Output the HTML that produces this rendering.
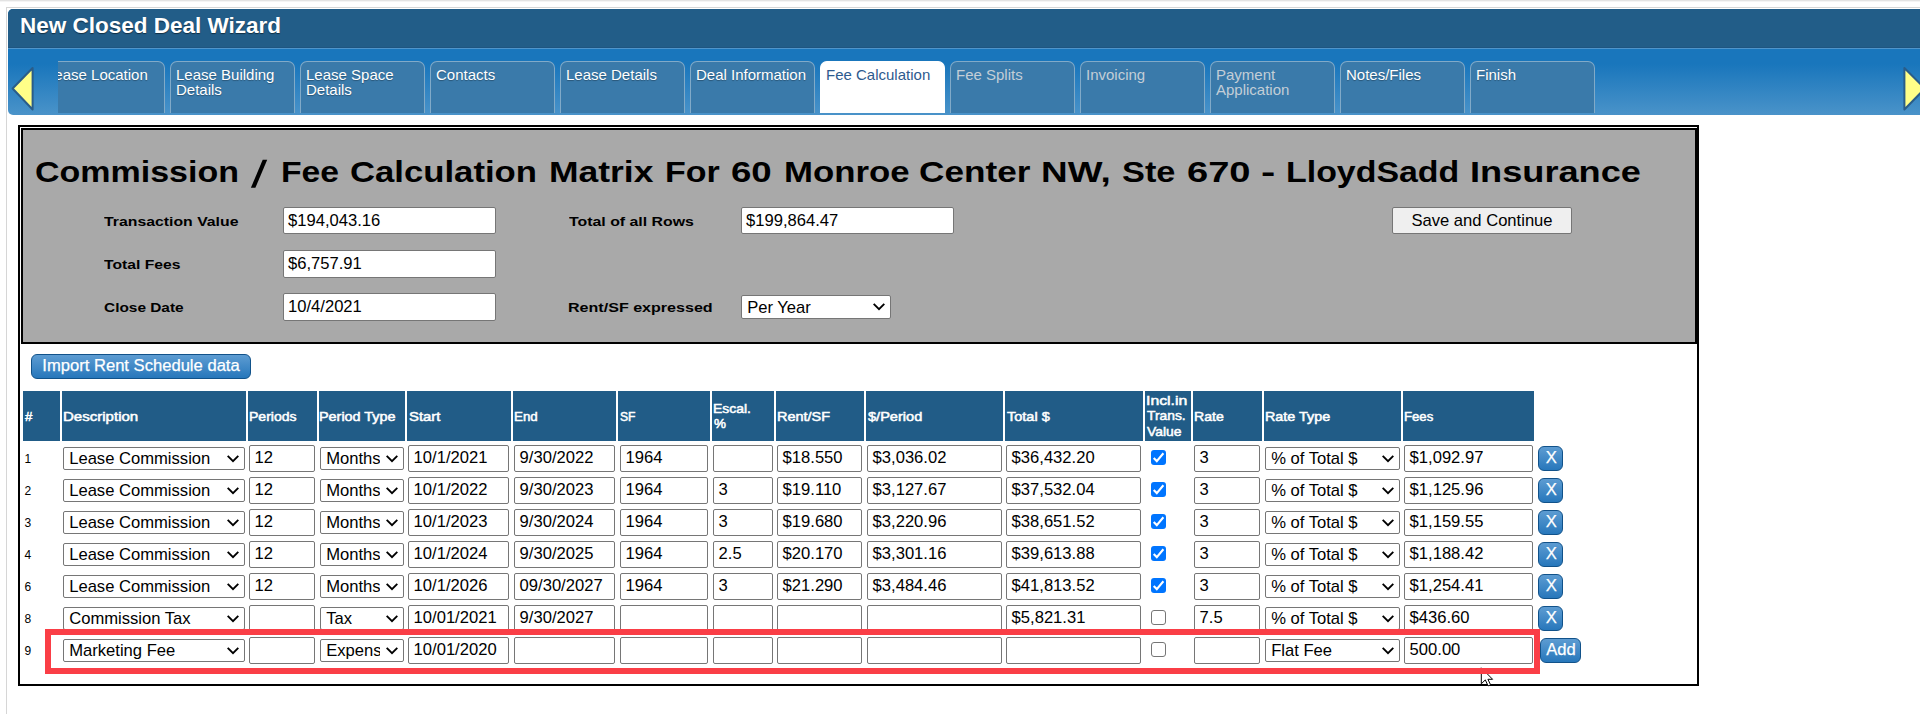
<!DOCTYPE html>
<html><head><meta charset="utf-8"><title>New Closed Deal Wizard</title>
<style>
html,body{margin:0;padding:0;background:#fff;}
body{width:1920px;height:714px;position:relative;overflow:hidden;font-family:"Liberation Sans", sans-serif;font-size:16px;color:#000;}
.abs,.ft,.in,.sel,.cb,.btn,.tab,.hc,.rn{position:absolute;box-sizing:border-box;}
.ft{white-space:nowrap;font-weight:bold;transform-origin:0 0;display:block;}
.in{background:#fff;border:1px solid #767676;border-radius:2px;height:27px;padding:0 0 0 4.6px;line-height:24px;font-size:16.6px;white-space:nowrap;overflow:hidden;}
.in.g{line-height:26px;padding-left:4px;}
.sel{background:#fff;border:1px solid #767676;border-radius:2px;height:23px;padding:0 0 0 5.2px;line-height:21px;font-size:16.6px;white-space:nowrap;overflow:hidden;}
.st{display:block;overflow:hidden;width:calc(100% - 23px);}
.sel svg{position:absolute;right:5px;top:7px;}
.cb{width:15px;height:15px;border-radius:3px;}
.cb.on{background:#0075ff;}
.cb.off{background:#fff;border:1px solid #767676;}
.btn{border:1px solid #11528a;border-radius:6px;background:linear-gradient(#5d9cd2,#2777bb);color:#fff;font-size:16.6px;text-align:center;-webkit-text-stroke:.25px #fff;}
.tab{top:61px;width:125px;height:52px;border:1px solid rgba(255,255,255,.36);border-bottom:none;border-radius:7px 7px 0 0;background:#3a7aaa;color:#fff;font-size:15px;line-height:15px;padding:5px 0 0 5px;text-shadow:0 1px 1px rgba(0,0,0,.3);}
.tab.dis{color:#c3ced7;text-shadow:none;}
.tab.act{background:#fff;color:#2e5a8e;border-color:#fff;text-shadow:none;}
.hc{top:391px;height:50px;background:#215c87;}
.rn{font-size:12px;line-height:14px;left:24.5px;}
</style></head><body>

<div class="abs" style="left:0;top:0;width:1920px;height:1px;background:#e3e3e3"></div>
<div class="abs" style="left:0;top:1px;width:1920px;height:1px;background:#f4f4f4"></div>
<div class="abs" style="left:6px;top:7px;width:1914px;height:1px;background:#d6d6d6"></div>
<div class="abs" style="left:6px;top:7px;width:1px;height:707px;background:#d6d6d6"></div>
<div class="abs" style="left:8px;top:9px;width:1912px;height:106px;border-radius:5px 0 0 5px;overflow:hidden;background:linear-gradient(#1976bc 0,#1976bc 39px,#1976bc 55px,#4a93c9 106px)">
<div class="abs" style="left:0;top:0;width:1912px;height:38px;background:#225d88"></div>
<div class="abs" style="left:0;top:38px;width:1912px;height:1px;background:#1f5580"></div>
<div class="abs" style="left:0;top:39px;width:1912px;height:1px;background:#4f95cb"></div>
</div>
<div class="abs" style="left:20px;top:11.5px;font-size:22.5px;font-weight:bold;color:#fff;line-height:28px;white-space:nowrap;text-shadow:0 1px 1px rgba(0,0,0,.5)">New Closed Deal Wizard</div>
<div class="abs" style="left:58px;top:49px;width:1540px;height:66px;overflow:hidden">
<div class="tab " style="left:-18px;top:12px">Lease Location</div>
<div class="tab " style="left:112px;top:12px">Lease Building<br>Details</div>
<div class="tab " style="left:242px;top:12px">Lease Space<br>Details</div>
<div class="tab " style="left:372px;top:12px">Contacts</div>
<div class="tab " style="left:502px;top:12px">Lease Details</div>
<div class="tab " style="left:632px;top:12px">Deal Information</div>
<div class="tab act" style="left:762px;top:12px">Fee Calculation</div>
<div class="tab dis" style="left:892px;top:12px">Fee Splits</div>
<div class="tab dis" style="left:1022px;top:12px">Invoicing</div>
<div class="tab dis" style="left:1152px;top:12px">Payment<br>Application</div>
<div class="tab " style="left:1282px;top:12px">Notes/Files</div>
<div class="tab " style="left:1412px;top:12px">Finish</div>
</div>
<svg class="abs" style="left:8px;top:60px" width="40" height="56"><polygon points="4.6,28.5 24.6,8 24.6,49.5" fill="#ffff88" stroke="#2a5d89" stroke-width="2" stroke-linejoin="round"/></svg>
<svg class="abs" style="left:1896px;top:60px" width="24" height="56"><polygon points="8.4,8 28.9,28.5 8.4,49.5" fill="#ffff88" stroke="#2a5d89" stroke-width="2" stroke-linejoin="round"/></svg>
<div class="abs" style="left:18px;top:125px;width:1681px;height:561px;border:2px solid #000"></div>
<div class="abs" style="left:21px;top:128px;width:1676px;height:216px;border:2px solid #000;background:#a9a9a9"></div>
<div class="in g" style="left:283px;top:207px;width:213px">$194,043.16</div>
<div class="in g" style="left:283px;top:250px;width:213px;height:28px">$6,757.91</div>
<div class="in g" style="left:283px;top:293px;width:213px;height:28px">10/4/2021</div>
<div class="in g" style="left:741px;top:207px;width:213px">$199,864.47</div>
<div class="sel" style="left:741px;top:295px;width:150px;height:24px;line-height:23px"><span class="st">Per Year</span><svg width="12" height="8" viewBox="0 0 12 8"><polyline points="0.7,0.9 6,6.1 11.3,0.9" fill="none" stroke="#000" stroke-width="1.9"/></svg></div>
<div class="abs" style="left:1392px;top:207px;width:180px;height:27px;border:1px solid #767676;border-radius:2px;background:#efefef;text-align:center;line-height:26px;font-size:16.6px">Save and Continue</div>
<div class="btn" style="left:31px;top:354px;width:220px;height:25px;line-height:22px">Import Rent Schedule data</div>
<div class="hc" style="left:23px;width:37px"></div>
<div class="hc" style="left:62px;width:184px"></div>
<div class="hc" style="left:248px;width:69px"></div>
<div class="hc" style="left:319px;width:86px"></div>
<div class="hc" style="left:407px;width:104px"></div>
<div class="hc" style="left:513px;width:103px"></div>
<div class="hc" style="left:618px;width:92px"></div>
<div class="hc" style="left:712px;width:62px"></div>
<div class="hc" style="left:776px;width:88px"></div>
<div class="hc" style="left:866px;width:137px"></div>
<div class="hc" style="left:1005px;width:138px"></div>
<div class="hc" style="left:1145px;width:46px"></div>
<div class="hc" style="left:1193px;width:69px"></div>
<div class="hc" style="left:1264px;width:137px"></div>
<div class="hc" style="left:1403px;width:131px"></div>
<div class="rn" style="top:452px">1</div>
<div class="sel" style="left:63px;top:447px;width:182px"><span class="st">Lease Commission</span><svg width="12" height="8" viewBox="0 0 12 8"><polyline points="0.7,0.9 6,6.1 11.3,0.9" fill="none" stroke="#000" stroke-width="1.9"/></svg></div>
<div class="in" style="left:249px;top:445px;width:66px">12</div>
<div class="sel" style="left:320px;top:447px;width:84px"><span class="st">Months</span><svg width="12" height="8" viewBox="0 0 12 8"><polyline points="0.7,0.9 6,6.1 11.3,0.9" fill="none" stroke="#000" stroke-width="1.9"/></svg></div>
<div class="in" style="left:408px;top:445px;width:101px">10/1/2021</div>
<div class="in" style="left:514px;top:445px;width:101px">9/30/2022</div>
<div class="in" style="left:620px;top:445px;width:88px">1964</div>
<div class="in" style="left:713px;top:445px;width:60px"></div>
<div class="in" style="left:777px;top:445px;width:85px">$18.550</div>
<div class="in" style="left:867px;top:445px;width:135px">$3,036.02</div>
<div class="in" style="left:1006px;top:445px;width:135px">$36,432.20</div>
<div class="cb on" style="left:1151px;top:450px"><svg width="15" height="15" viewBox="0 0 15 15" style="display:block"><polyline points="2.7,8.0 5.8,11.1 12.4,3.3" fill="none" stroke="#fff" stroke-width="2.1"/></svg></div>
<div class="in" style="left:1194px;top:445px;width:66px">3</div>
<div class="sel" style="left:1265px;top:447px;width:135px"><span class="st">% of Total $</span><svg width="12" height="8" viewBox="0 0 12 8"><polyline points="0.7,0.9 6,6.1 11.3,0.9" fill="none" stroke="#000" stroke-width="1.9"/></svg></div>
<div class="in" style="left:1404px;top:445px;width:129px">$1,092.97</div>
<div class="btn" style="left:1538px;top:446px;width:25px;height:25px;line-height:22px;padding-left:1.5px">X</div>
<div class="rn" style="top:484px">2</div>
<div class="sel" style="left:63px;top:479px;width:182px"><span class="st">Lease Commission</span><svg width="12" height="8" viewBox="0 0 12 8"><polyline points="0.7,0.9 6,6.1 11.3,0.9" fill="none" stroke="#000" stroke-width="1.9"/></svg></div>
<div class="in" style="left:249px;top:477px;width:66px">12</div>
<div class="sel" style="left:320px;top:479px;width:84px"><span class="st">Months</span><svg width="12" height="8" viewBox="0 0 12 8"><polyline points="0.7,0.9 6,6.1 11.3,0.9" fill="none" stroke="#000" stroke-width="1.9"/></svg></div>
<div class="in" style="left:408px;top:477px;width:101px">10/1/2022</div>
<div class="in" style="left:514px;top:477px;width:101px">9/30/2023</div>
<div class="in" style="left:620px;top:477px;width:88px">1964</div>
<div class="in" style="left:713px;top:477px;width:60px">3</div>
<div class="in" style="left:777px;top:477px;width:85px">$19.110</div>
<div class="in" style="left:867px;top:477px;width:135px">$3,127.67</div>
<div class="in" style="left:1006px;top:477px;width:135px">$37,532.04</div>
<div class="cb on" style="left:1151px;top:482px"><svg width="15" height="15" viewBox="0 0 15 15" style="display:block"><polyline points="2.7,8.0 5.8,11.1 12.4,3.3" fill="none" stroke="#fff" stroke-width="2.1"/></svg></div>
<div class="in" style="left:1194px;top:477px;width:66px">3</div>
<div class="sel" style="left:1265px;top:479px;width:135px"><span class="st">% of Total $</span><svg width="12" height="8" viewBox="0 0 12 8"><polyline points="0.7,0.9 6,6.1 11.3,0.9" fill="none" stroke="#000" stroke-width="1.9"/></svg></div>
<div class="in" style="left:1404px;top:477px;width:129px">$1,125.96</div>
<div class="btn" style="left:1538px;top:478px;width:25px;height:25px;line-height:22px;padding-left:1.5px">X</div>
<div class="rn" style="top:516px">3</div>
<div class="sel" style="left:63px;top:511px;width:182px"><span class="st">Lease Commission</span><svg width="12" height="8" viewBox="0 0 12 8"><polyline points="0.7,0.9 6,6.1 11.3,0.9" fill="none" stroke="#000" stroke-width="1.9"/></svg></div>
<div class="in" style="left:249px;top:509px;width:66px">12</div>
<div class="sel" style="left:320px;top:511px;width:84px"><span class="st">Months</span><svg width="12" height="8" viewBox="0 0 12 8"><polyline points="0.7,0.9 6,6.1 11.3,0.9" fill="none" stroke="#000" stroke-width="1.9"/></svg></div>
<div class="in" style="left:408px;top:509px;width:101px">10/1/2023</div>
<div class="in" style="left:514px;top:509px;width:101px">9/30/2024</div>
<div class="in" style="left:620px;top:509px;width:88px">1964</div>
<div class="in" style="left:713px;top:509px;width:60px">3</div>
<div class="in" style="left:777px;top:509px;width:85px">$19.680</div>
<div class="in" style="left:867px;top:509px;width:135px">$3,220.96</div>
<div class="in" style="left:1006px;top:509px;width:135px">$38,651.52</div>
<div class="cb on" style="left:1151px;top:514px"><svg width="15" height="15" viewBox="0 0 15 15" style="display:block"><polyline points="2.7,8.0 5.8,11.1 12.4,3.3" fill="none" stroke="#fff" stroke-width="2.1"/></svg></div>
<div class="in" style="left:1194px;top:509px;width:66px">3</div>
<div class="sel" style="left:1265px;top:511px;width:135px"><span class="st">% of Total $</span><svg width="12" height="8" viewBox="0 0 12 8"><polyline points="0.7,0.9 6,6.1 11.3,0.9" fill="none" stroke="#000" stroke-width="1.9"/></svg></div>
<div class="in" style="left:1404px;top:509px;width:129px">$1,159.55</div>
<div class="btn" style="left:1538px;top:510px;width:25px;height:25px;line-height:22px;padding-left:1.5px">X</div>
<div class="rn" style="top:548px">4</div>
<div class="sel" style="left:63px;top:543px;width:182px"><span class="st">Lease Commission</span><svg width="12" height="8" viewBox="0 0 12 8"><polyline points="0.7,0.9 6,6.1 11.3,0.9" fill="none" stroke="#000" stroke-width="1.9"/></svg></div>
<div class="in" style="left:249px;top:541px;width:66px">12</div>
<div class="sel" style="left:320px;top:543px;width:84px"><span class="st">Months</span><svg width="12" height="8" viewBox="0 0 12 8"><polyline points="0.7,0.9 6,6.1 11.3,0.9" fill="none" stroke="#000" stroke-width="1.9"/></svg></div>
<div class="in" style="left:408px;top:541px;width:101px">10/1/2024</div>
<div class="in" style="left:514px;top:541px;width:101px">9/30/2025</div>
<div class="in" style="left:620px;top:541px;width:88px">1964</div>
<div class="in" style="left:713px;top:541px;width:60px">2.5</div>
<div class="in" style="left:777px;top:541px;width:85px">$20.170</div>
<div class="in" style="left:867px;top:541px;width:135px">$3,301.16</div>
<div class="in" style="left:1006px;top:541px;width:135px">$39,613.88</div>
<div class="cb on" style="left:1151px;top:546px"><svg width="15" height="15" viewBox="0 0 15 15" style="display:block"><polyline points="2.7,8.0 5.8,11.1 12.4,3.3" fill="none" stroke="#fff" stroke-width="2.1"/></svg></div>
<div class="in" style="left:1194px;top:541px;width:66px">3</div>
<div class="sel" style="left:1265px;top:543px;width:135px"><span class="st">% of Total $</span><svg width="12" height="8" viewBox="0 0 12 8"><polyline points="0.7,0.9 6,6.1 11.3,0.9" fill="none" stroke="#000" stroke-width="1.9"/></svg></div>
<div class="in" style="left:1404px;top:541px;width:129px">$1,188.42</div>
<div class="btn" style="left:1538px;top:542px;width:25px;height:25px;line-height:22px;padding-left:1.5px">X</div>
<div class="rn" style="top:580px">6</div>
<div class="sel" style="left:63px;top:575px;width:182px"><span class="st">Lease Commission</span><svg width="12" height="8" viewBox="0 0 12 8"><polyline points="0.7,0.9 6,6.1 11.3,0.9" fill="none" stroke="#000" stroke-width="1.9"/></svg></div>
<div class="in" style="left:249px;top:573px;width:66px">12</div>
<div class="sel" style="left:320px;top:575px;width:84px"><span class="st">Months</span><svg width="12" height="8" viewBox="0 0 12 8"><polyline points="0.7,0.9 6,6.1 11.3,0.9" fill="none" stroke="#000" stroke-width="1.9"/></svg></div>
<div class="in" style="left:408px;top:573px;width:101px">10/1/2026</div>
<div class="in" style="left:514px;top:573px;width:101px">09/30/2027</div>
<div class="in" style="left:620px;top:573px;width:88px">1964</div>
<div class="in" style="left:713px;top:573px;width:60px">3</div>
<div class="in" style="left:777px;top:573px;width:85px">$21.290</div>
<div class="in" style="left:867px;top:573px;width:135px">$3,484.46</div>
<div class="in" style="left:1006px;top:573px;width:135px">$41,813.52</div>
<div class="cb on" style="left:1151px;top:578px"><svg width="15" height="15" viewBox="0 0 15 15" style="display:block"><polyline points="2.7,8.0 5.8,11.1 12.4,3.3" fill="none" stroke="#fff" stroke-width="2.1"/></svg></div>
<div class="in" style="left:1194px;top:573px;width:66px">3</div>
<div class="sel" style="left:1265px;top:575px;width:135px"><span class="st">% of Total $</span><svg width="12" height="8" viewBox="0 0 12 8"><polyline points="0.7,0.9 6,6.1 11.3,0.9" fill="none" stroke="#000" stroke-width="1.9"/></svg></div>
<div class="in" style="left:1404px;top:573px;width:129px">$1,254.41</div>
<div class="btn" style="left:1538px;top:574px;width:25px;height:25px;line-height:22px;padding-left:1.5px">X</div>
<div class="rn" style="top:612px">8</div>
<div class="sel" style="left:63px;top:607px;width:182px"><span class="st">Commission Tax</span><svg width="12" height="8" viewBox="0 0 12 8"><polyline points="0.7,0.9 6,6.1 11.3,0.9" fill="none" stroke="#000" stroke-width="1.9"/></svg></div>
<div class="in" style="left:249px;top:605px;width:66px"></div>
<div class="sel" style="left:320px;top:607px;width:84px"><span class="st">Tax</span><svg width="12" height="8" viewBox="0 0 12 8"><polyline points="0.7,0.9 6,6.1 11.3,0.9" fill="none" stroke="#000" stroke-width="1.9"/></svg></div>
<div class="in" style="left:408px;top:605px;width:101px">10/01/2021</div>
<div class="in" style="left:514px;top:605px;width:101px">9/30/2027</div>
<div class="in" style="left:620px;top:605px;width:88px"></div>
<div class="in" style="left:713px;top:605px;width:60px"></div>
<div class="in" style="left:777px;top:605px;width:85px"></div>
<div class="in" style="left:867px;top:605px;width:135px"></div>
<div class="in" style="left:1006px;top:605px;width:135px">$5,821.31</div>
<div class="cb off" style="left:1151px;top:610px"></div>
<div class="in" style="left:1194px;top:605px;width:66px">7.5</div>
<div class="sel" style="left:1265px;top:607px;width:135px"><span class="st">% of Total $</span><svg width="12" height="8" viewBox="0 0 12 8"><polyline points="0.7,0.9 6,6.1 11.3,0.9" fill="none" stroke="#000" stroke-width="1.9"/></svg></div>
<div class="in" style="left:1404px;top:605px;width:129px">$436.60</div>
<div class="btn" style="left:1538px;top:606px;width:25px;height:25px;line-height:22px;padding-left:1.5px">X</div>
<div class="rn" style="top:644px">9</div>
<div class="sel" style="left:63px;top:639px;width:182px"><span class="st">Marketing Fee</span><svg width="12" height="8" viewBox="0 0 12 8"><polyline points="0.7,0.9 6,6.1 11.3,0.9" fill="none" stroke="#000" stroke-width="1.9"/></svg></div>
<div class="in" style="left:249px;top:637px;width:66px"></div>
<div class="sel" style="left:320px;top:639px;width:84px"><span class="st">Expens</span><svg width="12" height="8" viewBox="0 0 12 8"><polyline points="0.7,0.9 6,6.1 11.3,0.9" fill="none" stroke="#000" stroke-width="1.9"/></svg></div>
<div class="in" style="left:408px;top:637px;width:101px">10/01/2020</div>
<div class="in" style="left:514px;top:637px;width:101px"></div>
<div class="in" style="left:620px;top:637px;width:88px"></div>
<div class="in" style="left:713px;top:637px;width:60px"></div>
<div class="in" style="left:777px;top:637px;width:85px"></div>
<div class="in" style="left:867px;top:637px;width:135px"></div>
<div class="in" style="left:1006px;top:637px;width:135px"></div>
<div class="cb off" style="left:1151px;top:642px"></div>
<div class="in" style="left:1194px;top:637px;width:66px"></div>
<div class="sel" style="left:1265px;top:639px;width:135px"><span class="st">Flat Fee</span><svg width="12" height="8" viewBox="0 0 12 8"><polyline points="0.7,0.9 6,6.1 11.3,0.9" fill="none" stroke="#000" stroke-width="1.9"/></svg></div>
<div class="in" style="left:1404px;top:637px;width:129px">500.00</div>
<div class="btn" style="left:1540px;top:638px;width:41px;height:25px;line-height:22px;padding-left:1px">Add</div>
<svg class="abs" style="left:1470px;top:660px" width="30" height="30" viewBox="0 0 30 30"><path d="M11.3,7.8 L11.3,23.8 L15.3,19.9 L18.1,25.9 L20.6,24.8 L17.9,19.3 L22.6,19.3 Z" fill="#fff" stroke="#000" stroke-width="1" stroke-linejoin="round"/></svg>
<div class="abs" style="left:45px;top:629px;width:1495px;height:45px;border:6px solid #fa3e46"></div>
<svg class="abs" style="left:245px;top:155px" width="30" height="40"><polygon points="5.9,32.8 10.4,32.8 22.2,4.7 17.7,4.7" fill="#000"/></svg>
<span class="ft" style="left:35.34px;top:155.05px;font-size:30.0px;line-height:33.51px;color:#000;transform:scaleX(1.1332)">Commission</span>
<span class="ft" style="left:281.49px;top:155.05px;font-size:30.0px;line-height:33.51px;color:#000;transform:scaleX(1.1228)">Fee</span>
<span class="ft" style="left:350.32px;top:155.05px;font-size:30.0px;line-height:33.51px;color:#000;transform:scaleX(1.1563)">Calculation</span>
<span class="ft" style="left:548.98px;top:155.05px;font-size:30.0px;line-height:33.51px;color:#000;transform:scaleX(1.1814)">Matrix</span>
<span class="ft" style="left:665.48px;top:155.05px;font-size:30.0px;line-height:33.51px;color:#000;transform:scaleX(1.1320)">For</span>
<span class="ft" style="left:731.26px;top:155.05px;font-size:30.0px;line-height:33.51px;color:#000;transform:scaleX(1.2205)">60</span>
<span class="ft" style="left:783.63px;top:155.05px;font-size:30.0px;line-height:33.51px;color:#000;transform:scaleX(1.1589)">Monroe</span>
<span class="ft" style="left:919.40px;top:155.05px;font-size:30.0px;line-height:33.51px;color:#000;transform:scaleX(1.1723)">Center</span>
<span class="ft" style="left:1041.49px;top:155.05px;font-size:30.0px;line-height:33.51px;color:#000;transform:scaleX(1.2299)">NW,</span>
<span class="ft" style="left:1122.46px;top:155.05px;font-size:30.0px;line-height:33.51px;color:#000;transform:scaleX(1.1436)">Ste</span>
<span class="ft" style="left:1187.41px;top:155.05px;font-size:30.0px;line-height:33.51px;color:#000;transform:scaleX(1.2693)">670</span>
<span class="ft" style="left:1261.16px;top:155.05px;font-size:30.0px;line-height:33.51px;color:#000;transform:scaleX(1.4306)">-</span>
<span class="ft" style="left:1286.08px;top:155.05px;font-size:30.0px;line-height:33.51px;color:#000;transform:scaleX(1.1301)">LloydSadd</span>
<span class="ft" style="left:1469.84px;top:155.05px;font-size:30.0px;line-height:33.51px;color:#000;transform:scaleX(1.2063)">Insurance</span>
<span class="ft" style="left:104.20px;top:214.29px;font-size:13.6px;line-height:15.19px;color:#000;transform:scaleX(1.1630)">Transaction Value</span>
<span class="ft" style="left:104.20px;top:257.29px;font-size:13.6px;line-height:15.19px;color:#000;transform:scaleX(1.1537)">Total Fees</span>
<span class="ft" style="left:103.72px;top:300.29px;font-size:13.6px;line-height:15.19px;color:#000;transform:scaleX(1.1334)">Close Date</span>
<span class="ft" style="left:569.20px;top:214.29px;font-size:13.6px;line-height:15.19px;color:#000;transform:scaleX(1.1673)">Total of all Rows</span>
<span class="ft" style="left:568.20px;top:300.49px;font-size:13.6px;line-height:15.19px;color:#000;transform:scaleX(1.1820)">Rent/SF expressed</span>
<span class="ft" style="left:25.45px;top:409.50px;font-size:12.6px;line-height:14.07px;color:#fff;transform:scaleX(1.0580);-webkit-text-stroke:.5px #fff;font-weight:normal">#</span>
<span class="ft" style="left:63.01px;top:409.50px;font-size:12.6px;line-height:14.07px;color:#fff;transform:scaleX(1.1941);-webkit-text-stroke:.5px #fff;font-weight:normal">Description</span>
<span class="ft" style="left:248.89px;top:409.50px;font-size:12.6px;line-height:14.07px;color:#fff;transform:scaleX(1.1146);-webkit-text-stroke:.5px #fff;font-weight:normal">Periods</span>
<span class="ft" style="left:319.36px;top:409.50px;font-size:12.6px;line-height:14.07px;color:#fff;transform:scaleX(1.1434);-webkit-text-stroke:.5px #fff;font-weight:normal">Period Type</span>
<span class="ft" style="left:408.55px;top:409.50px;font-size:12.6px;line-height:14.07px;color:#fff;transform:scaleX(1.1766);-webkit-text-stroke:.5px #fff;font-weight:normal">Start</span>
<span class="ft" style="left:514.14px;top:409.50px;font-size:12.6px;line-height:14.07px;color:#fff;transform:scaleX(1.0577);-webkit-text-stroke:.5px #fff;font-weight:normal">End</span>
<span class="ft" style="left:619.97px;top:409.50px;font-size:12.6px;line-height:14.07px;color:#fff;transform:scaleX(0.9632);-webkit-text-stroke:.5px #fff;font-weight:normal">SF</span>
<span class="ft" style="left:713.09px;top:401.60px;font-size:12.6px;line-height:14.07px;color:#fff;transform:scaleX(1.1069);-webkit-text-stroke:.5px #fff;font-weight:normal">Escal.</span>
<span class="ft" style="left:713.77px;top:417.30px;font-size:12.6px;line-height:14.07px;color:#fff;transform:scaleX(1.0673);-webkit-text-stroke:.5px #fff;font-weight:normal">%</span>
<span class="ft" style="left:777.35px;top:409.50px;font-size:12.6px;line-height:14.07px;color:#fff;transform:scaleX(1.1471);-webkit-text-stroke:.5px #fff;font-weight:normal">Rent/SF</span>
<span class="ft" style="left:867.88px;top:409.50px;font-size:12.6px;line-height:14.07px;color:#fff;transform:scaleX(1.1560);-webkit-text-stroke:.5px #fff;font-weight:normal">$/Period</span>
<span class="ft" style="left:1007.21px;top:409.50px;font-size:12.6px;line-height:14.07px;color:#fff;transform:scaleX(1.1521);-webkit-text-stroke:.5px #fff;font-weight:normal">Total $</span>
<span class="ft" style="left:1145.76px;top:393.60px;font-size:12.6px;line-height:14.07px;color:#fff;transform:scaleX(1.2533);-webkit-text-stroke:.5px #fff;font-weight:normal">Incl.in</span>
<span class="ft" style="left:1146.93px;top:409.30px;font-size:12.6px;line-height:14.07px;color:#fff;transform:scaleX(1.0963);-webkit-text-stroke:.5px #fff;font-weight:normal">Trans.</span>
<span class="ft" style="left:1147.14px;top:425.30px;font-size:12.6px;line-height:14.07px;color:#fff;transform:scaleX(1.1016);-webkit-text-stroke:.5px #fff;font-weight:normal">Value</span>
<span class="ft" style="left:1194.08px;top:409.50px;font-size:12.6px;line-height:14.07px;color:#fff;transform:scaleX(1.1174);-webkit-text-stroke:.5px #fff;font-weight:normal">Rate</span>
<span class="ft" style="left:1264.66px;top:409.50px;font-size:12.6px;line-height:14.07px;color:#fff;transform:scaleX(1.1401);-webkit-text-stroke:.5px #fff;font-weight:normal">Rate Type</span>
<span class="ft" style="left:1404.46px;top:409.50px;font-size:12.6px;line-height:14.07px;color:#fff;transform:scaleX(1.0429);-webkit-text-stroke:.5px #fff;font-weight:normal">Fees</span>
</body></html>
